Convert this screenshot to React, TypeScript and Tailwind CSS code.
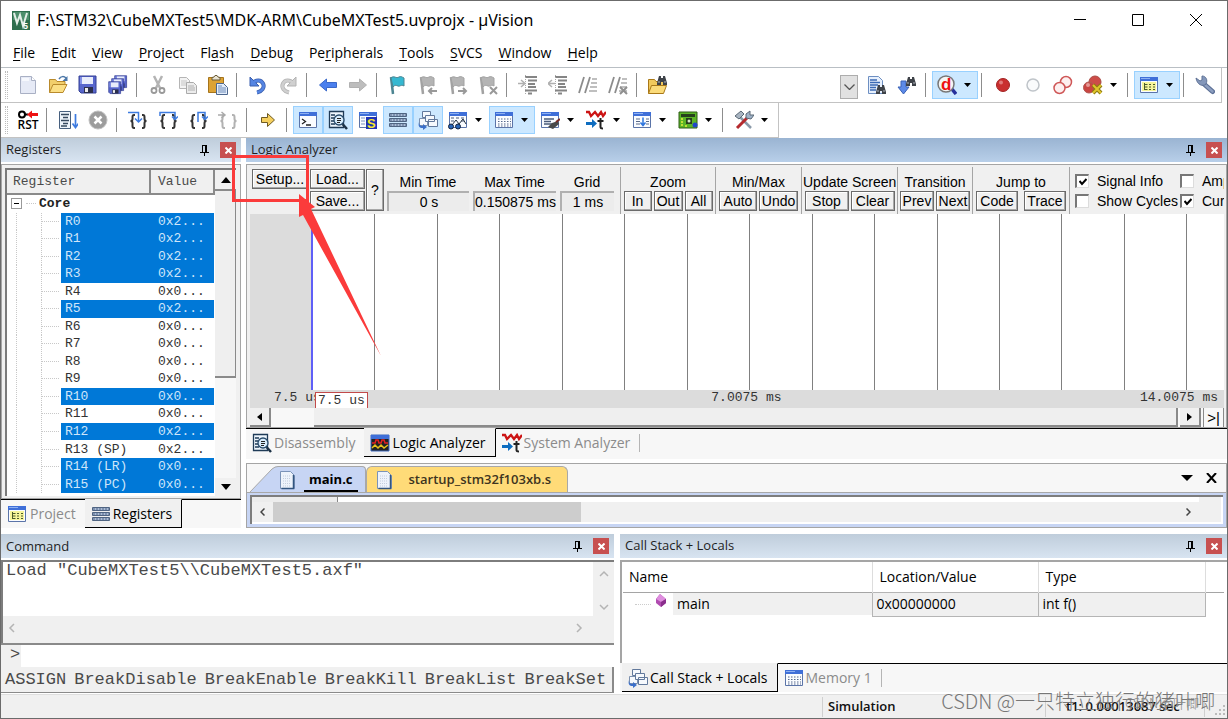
import type { ReactNode } from 'react';
import clsx from 'clsx';

/* ---------- icons ---------- */

function Icon({ children, size = 20 }: { children: ReactNode; size?: number }) {
  return (
    <svg width={size} height={size} viewBox="0 0 20 20" fill="none" className="shrink-0" aria-hidden="true">
      {children}
    </svg>
  );
}

function Caret() {
  return (
    <svg width="7" height="4" viewBox="0 0 7 4" aria-hidden="true">
      <path d="M0 0h7L3.500 4z" fill="#000" />
    </svg>
  );
}

const page = (
  <Icon>
    <path d="M2.500 1.500h11l4 4v13h-15z" fill="#e6eaf6" stroke="#a9b0c4" />
    <path d="M13.500 1.500v4h4" fill="#fff" stroke="#a9b0c4" />
    <path d="M4 3h7v3H4z" fill="#f6f8fd" />
  </Icon>
);

const open = (
  <Icon>
    <path d="M1.500 17.500v-13h6l1.500 2h8v3" fill="#f2cf6c" stroke="#b98a2c" />
    <path d="M1.500 17.500l3.500-8h14l-4 8z" fill="#fbdf85" stroke="#b98a2c" />
    <path d="M11 4c2-3 5-3 7-1" stroke="#4b77a8" strokeWidth="1.500" />
    <path d="M19.500 1v5h-5z" fill="#4b77a8" />
  </Icon>
);

function Floppy({ x = 0, y = 0, s = 1 }: { x?: number; y?: number; s?: number }) {
  return (
    <g transform={`translate(${x} ${y}) scale(${s})`}>
      <path d="M1 1h17v17H3l-2-2z" fill="#5866cc" stroke="#333f95" />
      <path d="M4 2h11v7H4z" fill="#e9edfb" />
      <path d="M2 2h2v7H2z" fill="#8391e6" />
      <path d="M6 12h9v6H6z" fill="#2c2f4c" />
      <path d="M7 13h3v4H7z" fill="#eee" />
    </g>
  );
}

const save = (
  <Icon>
    <Floppy x={0} y={0} />
  </Icon>
);

const saveAll = (
  <Icon>
    <Floppy x={6} y={0} s={0.7} />
    <Floppy x={3} y={3} s={0.7} />
    <Floppy x={0} y={6} s={0.7} />
  </Icon>
);

const cut = (
  <Icon>
    <path d="M6 1l6 12M14 1L8 13" stroke="#b4b4b4" strokeWidth="2.500" />
    <circle cx="6" cy="15.500" r="2.500" stroke="#999" strokeWidth="1.800" />
    <circle cx="14" cy="15.500" r="2.500" stroke="#999" strokeWidth="1.800" />
  </Icon>
);

const copy = (
  <Icon>
    <path d="M1.500 2.500h7l3 3v8h-10z" fill="#f3f3f3" stroke="#b5b5b5" />
    <path d="M3 6h6M3 8h6M3 10h6" stroke="#c5c5c5" />
    <path d="M8.500 7.500h7l3 3v8h-10z" fill="#ececec" stroke="#aaa" />
    <path d="M10 11h6M10 13h7M10 15h7" stroke="#b0b0b0" />
  </Icon>
);

const paste = (
  <Icon>
    <path d="M.500 2.500h15v15H.500z" fill="#dda335" stroke="#a5741c" />
    <path d="M4 5h8V2.500L10 2 9 .500H7L6 2l-2 .500z" fill="#e8e3d2" stroke="#6b5b36" />
    <path d="M8.500 8.500h7l4 4v7h-11z" fill="#e4eefb" stroke="#4d678e" />
    <path d="M10 11h4M10 13h8M10 15h8M10 17h8" stroke="#6c8ab8" />
  </Icon>
);

function Turn({ color, edge, flip }: { color: string; edge: string; flip?: boolean }) {
  return (
    <Icon>
      <g transform={flip ? 'translate(20 0) scale(-1 1)' : undefined}>
        <path d="M9 17.500c5-1 8-5 6-9-2-4-7-4-10-.500" stroke={edge} strokeWidth="4" />
        <path d="M2 2v9h9z" fill={color} stroke={edge} />
        <path d="M9 17.500c5-1 8-5 6-9-2-4-7-4-10-.500" stroke={color} strokeWidth="2.500" />
      </g>
    </Icon>
  );
}

function Arrow({ color, edge, flip }: { color: string; edge: string; flip?: boolean }) {
  return (
    <Icon>
      <path
        transform={flip ? 'translate(20 0) scale(-1 1)' : undefined}
        d="M1.500 10l7-6v3.500h10v5h-10V16z"
        fill={color}
        stroke={edge}
      />
    </Icon>
  );
}

function Flag({ children, color = '#b4b4b4', edge = '#a2a2a2' }: { children?: ReactNode; color?: string; edge?: string }) {
  return (
    <Icon>
      <path d="M3 2l2 17" stroke={edge} strokeWidth="2.500" />
      <path d="M3 3c3-3 5 1 8-1 2-1 3 0 5 1v8c-3-2-4 1-6 0-3-1-3-1-5 1z" fill={color} stroke={edge} />
      {children}
    </Icon>
  );
}

function Indent({ out }: { out?: boolean }) {
  return (
    <Icon>
      <path d="M7 2h12M10 5.500h9M10 9h7M10 12h8M7 15.500h12M10 18.500h4" stroke="#858585" strokeWidth="2" />
      <path d="M7.500 0v20" stroke="#aaa" strokeDasharray="1 1" />
      <path d={out ? 'M0 8.500h7M4 5L0 8.500 4 12' : 'M0 8.500h7M3 5l4 3.500L3 12'} stroke="#b0b0b0" strokeWidth="1.500" />
    </Icon>
  );
}

function Comment({ off }: { off?: boolean }) {
  return (
    <Icon>
      <path d="M6 2L1 18M12 2L7 18" stroke="#8c8c8c" strokeWidth="1.800" />
      <path d="M14 4h5M13 8h6M12 12h7M11 16h8" stroke="#aaa" strokeWidth="1.500" />
      {off && <path d="M12 12l7 7M19 12l-7 7" stroke="#8f8f8f" strokeWidth="2" />}
    </Icon>
  );
}

function Binoculars({ x = 0, y = 0 }: { x?: number; y?: number }) {
  return (
    <g transform={`translate(${x} ${y})`}>
      <path d="M2 0h2v2h2V0h2l2 7v2H6V6H4v3H0V7z" fill="#3e4248" />
      <path d="M1 6h2M7 6h2" stroke="#aeb4bd" />
    </g>
  );
}

const findInFiles = (
  <Icon>
    <path d="M.500 18.500v-14h6l1.500 2h9v3" fill="#f1c95c" stroke="#a97818" />
    <path d="M.500 18.500l3-8h15l-3 8z" fill="#fbdb7a" stroke="#a97818" />
    <Binoculars x={9} y={1} />
  </Icon>
);

const findDoc = (
  <Icon>
    <path d="M1.500 1.500h10l4 4v13h-14z" fill="#e7f0fd" stroke="#6d8fc2" />
    <path d="M3 5h7M3 7.500h10M3 10h8M3 12.500h6M3 15h6" stroke="#3c6ab4" strokeWidth="1.300" />
    <Binoculars x={9} y={10} />
  </Icon>
);

const findNext = (
  <Icon>
    <path d="M4 6h5v6h3l-5.500 7L1 12h3z" fill="#5c8ae8" stroke="#3a62b6" />
    <Binoculars x={9} y={2} />
  </Icon>
);

const debug = (
  <Icon>
    <path d="M14 13l5 6" stroke="#26309c" strokeWidth="3.500" />
    <circle cx="9" cy="9" r="8" fill="#f5f5f5" stroke="#777" strokeWidth="1.500" />
    <text x="4" y="15" fontSize="17" fontWeight="700" fill="#ee1111" className="font-['Liberation_Sans']">
      d
    </text>
  </Icon>
);

const breakpoint = (
  <Icon>
    <circle cx="10" cy="10" r="6.500" fill="#c92f2f" stroke="#a32424" />
    <circle cx="8" cy="7.500" r="2" fill="#e07a7a" />
  </Icon>
);

const breakpointOff = (
  <Icon>
    <circle cx="10" cy="10" r="6" fill="#fafbfc" stroke="#bfc4c9" strokeWidth="1.500" />
  </Icon>
);

const breakpointsOff = (
  <Icon>
    <circle cx="13" cy="7" r="5.500" fill="#fdf0f0" stroke="#cf5757" strokeWidth="1.500" />
    <circle cx="6.500" cy="13" r="5.500" fill="#fdf0f0" stroke="#cf5757" strokeWidth="1.500" />
  </Icon>
);

const breakpointsKill = (
  <Icon>
    <circle cx="12" cy="7" r="6" fill="#cd4c48" stroke="#a94a44" />
    <circle cx="6" cy="12.500" r="5.500" fill="#c94541" stroke="#b25b55" />
    <circle cx="5" cy="10" r="2" fill="#e59a96" />
    <path d="M10 10l8 8M18 10l-8 8" stroke="#8d7a10" strokeWidth="4" />
    <path d="M10 10l8 8M18 10l-8 8" stroke="#e0c52c" strokeWidth="2" />
  </Icon>
);

function WindowFrame({ children, size }: { children?: ReactNode; size?: number }) {
  return (
    <Icon size={size}>
      <path d="M1.500 2.500h17v15h-17z" fill="#fafcff" stroke="#5b74a8" />
      <path d="M1 2h18v4H1z" fill="#3f6fd8" />
      <path d="M2 3h9v1H2z" fill="#8db0f2" />
      {children}
    </Icon>
  );
}

const projectWindow = (
  <WindowFrame>
    <path d="M3 7h14v9H3z" fill="#f7f59a" />
    <path d="M5.500 8v7M5.500 9.500h3M5.500 12h3M5.500 14.500h3M10 9.500h2M10 12h2M10 14.500h2M14 9.500h2M14 12h2M14 14.500h2" stroke="#4c5a2b" />
  </WindowFrame>
);

const wrench = (
  <Icon>
    <path d="M9 9l8.500 7.500" stroke="#5c7096" strokeWidth="5" strokeLinecap="round" />
    <path d="M9 9l8.500 7.500" stroke="#8c9ec0" strokeWidth="2.500" strokeLinecap="round" />
    <path d="M1 3l4 3 2-1 0-4c4 0 6 4 4 8-3 3-9 1-10-6z" fill="#8497ba" stroke="#5f7296" />
  </Icon>
);

const run = (
  <Icon>
    <path d="M1.500 1.500h11v17h-11z" fill="#eef4fb" stroke="#47607f" />
    <path d="M3 4.500h8M5 7.500h5M3 10.500h8M5 13.500h5M3 16h6" stroke="#36495f" strokeWidth="1.500" />
    <path d="M17.500 4v13M14.500 13.500l3 4 3-4" stroke="#3d7be0" strokeWidth="1.700" />
  </Icon>
);

const stop = (
  <Icon>
    <circle cx="10" cy="10" r="9" fill="#9c9c9c" stroke="#c0c0c0" />
    <path d="M6.500 6.500l7 7M13.500 6.500l-7 7" stroke="#fff" strokeWidth="2.500" />
  </Icon>
);

function Braces({ d, tip, color = '#333' }: { d: string; tip: string; color?: string }) {
  return (
    <Icon>
      <path
        d="M7 5H6Q4.500 5 4.500 7v2q0 2-2 2 2 0 2 2v3q0 2 1.500 2h1M14 5h1q1.500 0 1.500 2v2q0 2 2 2-2 0-2 2v3q0 2-1.500 2h-1"
        stroke={color}
        strokeWidth="2"
      />
      <path d={d} stroke={color === '#333' ? '#3d7be0' : '#aaa'} strokeWidth="1.500" />
      <path d={tip} stroke={color === '#333' ? '#3d7be0' : '#aaa'} strokeWidth="1.500" />
    </Icon>
  );
}

const showNext = (
  <Icon>
    <path d="M3.500 7.500h6v-4l7 6.500-7 6.500v-4h-6z" fill="#f5cf5e" stroke="#6e5a22" />
  </Icon>
);

const commandWindow = (
  <WindowFrame>
    <path d="M4 9l3.500 2.500L4 14M8 15h5" stroke="#222" strokeWidth="1.300" />
  </WindowFrame>
);

const disassembly = (
  <Icon>
    <path d="M1.500 1.500h14v16h-14z" fill="#eef6fd" stroke="#1f3b57" strokeWidth="1.300" />
    <path d="M3 5h4M3 8h3M3 11h3M3 14h4" stroke="#1f3b57" strokeWidth="1.300" />
    <path d="M14.500 14l4.500 5" stroke="#1d3247" strokeWidth="2.500" />
    <circle cx="11" cy="10" r="5" fill="#d9edfc" stroke="#274a6b" strokeWidth="1.300" />
    <path d="M9 8.500h4M9 10.500h4M9 12.500h3" stroke="#222" />
  </Icon>
);

const symbols = (
  <WindowFrame>
    <path d="M3 8h4M3 11h4M3 14h4" stroke="#7b93bd" />
    <path d="M8 7h11v12H8z" fill="#2033b5" />
    <text x="9" y="18" fontSize="13" fontWeight="700" fill="#f7e92b" className="font-['Liberation_Sans']">
      S
    </text>
  </WindowFrame>
);

const registersIcon = (
  <Icon>
    {[3, 8, 13].map((y) => (
      <g key={y}>
        <path d={`M1.500 ${y + 0.5}h17v3h-17z`} fill="#a9bbd4" stroke="#4f6482" />
        <path d={`M2 ${y + 2}h16`} stroke="#52678a" strokeDasharray="2 1" />
      </g>
    ))}
  </Icon>
);

const callStackIcon = (
  <Icon>
    <path d="M4.500 1.500h8v6h-8z" fill="#f6f9fd" stroke="#62799c" />
    <path d="M1.500 8.500h8v7h-8z" fill="#f6f9fd" stroke="#7c90ae" />
    <path d="M10.500 9.500h9v7h-9zM7.500 5.500h9v6h-9z" fill="#f6f9fd" stroke="#62799c" />
    <path d="M1 12c0 3 1 4 4 4v-2l4 3-4 3v-2c-4 0-5-2-4-6z" fill="#3b6fc9" />
  </Icon>
);

const watch = (
  <WindowFrame>
    <path d="M3 8h3M8 8h3M13 8h3M3 11h3M13 11h3" stroke="#4a5874" />
    <path d="M4 15l4-5 3 4 4-5 3 5" stroke="#22303f" />
    <circle cx="3" cy="16.500" r="2.500" fill="#2764b7" stroke="#14233d" />
    <circle cx="10" cy="16.500" r="2.500" fill="#2764b7" stroke="#14233d" />
  </WindowFrame>
);

const memory = (
  <WindowFrame>
    <path d="M4 9h13M4 11.500h13M4 14h13M4 16h13" stroke="#56698c" strokeDasharray="1.500 1.500" />
  </WindowFrame>
);

const serial = (
  <WindowFrame>
    <path d="M4 9h10M4 11.500h7M4 14h8" stroke="#4b5c7b" strokeWidth="1.300" />
    <path d="M8 17l4-4 6-2 1 3-6 5z" fill="#4a4a4a" />
    <path d="M16 12l4-3" stroke="#7b2b25" strokeWidth="2" />
  </WindowFrame>
);

const systemAnalyzer = (
  <Icon>
    <path d="M0 2h3l2 4 4-4 3 4 3-4 2 4 3-4" stroke="#cc1414" strokeWidth="2.300" />
    <path d="M0 12h6V9l5 4.500L6 18v-3H0z" fill="#0e6dc0" />
    <path d="M14.500 8v9q0 1.500 2.500 1.500M11.500 11h6" stroke="#222" strokeWidth="2" />
  </Icon>
);

const trace = (
  <WindowFrame>
    <path d="M4 9h4M4 11.500h4M4 14h4M14 9h3M14 11.500h3M14 14h3" stroke="#5a6b8a" />
    <path d="M11 7.500v7M8.500 12.500l2.500 3 2.500-3" stroke="#2d74dd" strokeWidth="1.500" />
  </WindowFrame>
);

const board = (
  <Icon>
    <path d="M1 2h18v16H1z" fill="#5bb526" stroke="#2f5d16" />
    <path d="M3 4h14v3H3zM8 8h6v6H8z" fill="#26401c" />
    <circle cx="11" cy="11" r="1.500" fill="#d9e7c9" />
    <path d="M3 9h2M3 12h2M3 15h2M7 16h2" stroke="#e3ee3b" strokeWidth="1.500" />
    <circle cx="17" cy="15" r="2.500" fill="#2145c9" />
  </Icon>
);

const tools = (
  <Icon>
    <path d="M4 5l13 13" stroke="#8a99a8" strokeWidth="2.500" />
    <path d="M1 6l6-5 3 3-5 5z" fill="#a9b5c2" stroke="#5a6875" />
    <path d="M13 8L3 18" stroke="#b52a2e" strokeWidth="3" />
    <path d="M12 8l0-4 4-3v4h4l-3 4z" fill="#9fb2c8" stroke="#5a6875" />
  </Icon>
);

const logicAnalyzerIcon = (
  <Icon>
    <path d="M1 2h18v16H1z" fill="#222" stroke="#3d68bd" />
    <path d="M1 2h18v4H1z" fill="#3f6fd8" />
    <path d="M2 10h3l1-3h2l1 3h2l1-3h2l1 3h3" stroke="#e52020" strokeWidth="1.500" />
    <path d="M2 15l3-3 3 3 3-3 3 3 4-3" stroke="#e8c21c" strokeWidth="1.500" />
  </Icon>
);

const fileIcon = (
  <Icon>
    <path d="M2.500 1.500h10l4 4v13h-14z" fill="#eef3fb" stroke="#7b93b8" />
    <path d="M5 6h8M5 8.500h8M5 11h8M5 13.500h8M5 16h8" stroke="#c3cddd" strokeDasharray="1 1" />
    <path d="M15.500 5v13.500h-12" stroke="#33557f" strokeWidth="1.500" />
  </Icon>
);

/* ---------- toolbars ---------- */

type ToolProps = { label: string; icon: ReactNode; menu?: boolean; active?: boolean };

function Tool({ label, icon, menu, active }: ToolProps) {
  return (
    <button
      type="button"
      aria-label={label}
      className={clsx(
        'flex h-7 shrink-0 items-center border',
        menu ? 'w-[46px] justify-between pl-1 pr-[6px]' : 'w-[30px] justify-center',
        active ? 'border-[#99d1ff] bg-[#cce8ff]' : 'border-transparent',
      )}
    >
      {icon}
      {menu && <Caret />}
    </button>
  );
}

function Sep() {
  return <span className="ml-[3px] mr-[6px] h-6 w-px shrink-0 bg-[#8d8d8d]" />;
}

function Grip() {
  return <span className="ml-1 mr-[5px] h-7 w-[3px] shrink-0 border-x border-dotted border-[#bcbcbc]" />;
}

const menus = [
  ['', 'F', 'ile'],
  ['', 'E', 'dit'],
  ['', 'V', 'iew'],
  ['', 'P', 'roject'],
  ['Fl', 'a', 'sh'],
  ['', 'D', 'ebug'],
  ['Pe', 'r', 'ipherals'],
  ['', 'T', 'ools'],
  ['', 'S', 'VCS'],
  ['', 'W', 'indow'],
  ['', 'H', 'elp'],
];

function TitleBar() {
  return (
    <header className="flex h-[38px] items-center bg-white pl-[11px]">
      <svg width="18" height="19" viewBox="0 0 18 19" aria-hidden="true">
        <path d="M0 0h18v19H0z" fill="#2d6e4d" />
        <path d="M1 1h16v8H1z" fill="#4d8f6c" />
        <path d="M2 2l3 10 3-8 3 11 4-13" stroke="#e4efe8" strokeWidth="2" fill="none" />
        <text x="11" y="18" fontSize="9" fontWeight="700" fill="#fff" className="font-['Liberation_Sans']">
          5
        </text>
      </svg>
      <h1 className="ml-[7px] font-['Noto_Sans',sans-serif] text-base font-normal leading-5 text-black">
        F:\STM32\CubeMXTest5\MDK-ARM\CubeMXTest5.uvprojx - µVision
      </h1>
      <div className="ml-auto flex pr-[2px]">
        <button type="button" aria-label="Minimize" className="grid h-9 w-[58px] place-items-center">
          <svg width="12" height="12" viewBox="0 0 12 12"><path d="M0 5.500h12" stroke="#000" /></svg>
        </button>
        <button type="button" aria-label="Maximize" className="grid h-9 w-[58px] place-items-center">
          <svg width="12" height="12" viewBox="0 0 12 12"><path d="M.500 .500h11v11H.500z" stroke="#000" fill="none" /></svg>
        </button>
        <button type="button" aria-label="Close" className="grid h-9 w-[58px] place-items-center">
          <svg width="12" height="12" viewBox="0 0 12 12"><path d="M0 0l12 12M12 0L0 12" stroke="#000" /></svg>
        </button>
      </div>
    </header>
  );
}

function MenuBar() {
  return (
    <nav className="flex h-[29px] items-center gap-4 border-b border-[#b9bfc4] bg-white pb-px pl-3 text-sm font-medium text-black">
      {menus.map(([before, key, after]) => (
        <button type="button" key={before + key + after}>
          {before}
          <span className="underline underline-offset-2">{key}</span>
          {after}
        </button>
      ))}
    </nav>
  );
}

function FileToolbar() {
  return (
    <div className="mr-[5px] flex h-[35px] items-center border-b border-r border-[#c3c3c3] bg-white pr-px">
      <Grip />
      <Tool label="New" icon={page} />
      <Tool label="Open" icon={open} />
      <Tool label="Save" icon={save} />
      <Tool label="Save all" icon={saveAll} />
      <Sep />
      <Tool label="Cut" icon={cut} />
      <Tool label="Copy" icon={copy} />
      <Tool label="Paste" icon={paste} />
      <Sep />
      <Tool label="Undo" icon={<Turn color="#5585e3" edge="#3b5fae" />} />
      <Tool label="Redo" icon={<Turn color="#d0d0d0" edge="#b3b3b3" flip />} />
      <Sep />
      <Tool label="Back" icon={<Arrow color="#4b80ee" edge="#3b69c9" />} />
      <Tool label="Forward" icon={<Arrow color="#bdbdbd" edge="#b1b1b1" flip />} />
      <Sep />
      <Tool label="Bookmark" icon={<Flag color="#35b8d1" edge="#4d8592" />} />
      <Tool label="Previous bookmark" icon={<Flag><path d="M19 16h-8M14 13l-3 3 3 3" stroke="#999" strokeWidth="2" /></Flag>} />
      <Tool label="Next bookmark" icon={<Flag><path d="M10 16h8M15 13l3 3-3 3" stroke="#999" strokeWidth="2" /></Flag>} />
      <Tool label="Clear bookmarks" icon={<Flag><path d="M12 12l7 7M19 12l-7 7" stroke="#999" strokeWidth="2" /></Flag>} />
      <Sep />
      <Tool label="Indent" icon={<Indent />} />
      <Tool label="Unindent" icon={<Indent out />} />
      <Tool label="Comment" icon={<Comment />} />
      <Tool label="Uncomment" icon={<Comment off />} />
      <Sep />
      <Tool label="Find in files" icon={findInFiles} />
      <button type="button" aria-label="Search history" className="ml-auto mr-1 mt-[3px] grid h-6 w-[18px] place-items-center border border-[#adadad] bg-[#e1e1e1]">
        <svg width="11" height="6" viewBox="0 0 11 6" fill="none"><path d="M.500 .500l5 5 5-5" stroke="#555" strokeWidth="1.300" /></svg>
      </button>
      <Tool label="Find" icon={findDoc} />
      <Tool label="Incremental find" icon={findNext} />
      <Sep />
      <Tool label="Debug session" icon={debug} menu active />
      <Sep />
      <Tool label="Breakpoint" icon={breakpoint} />
      <Tool label="Disable breakpoint" icon={breakpointOff} />
      <Tool label="Disable all breakpoints" icon={breakpointsOff} />
      <Tool label="Kill all breakpoints" icon={breakpointsKill} menu />
      <Sep />
      <Tool label="Project window" icon={projectWindow} menu active />
      <Sep />
      <Tool label="Configuration" icon={wrench} />
    </div>
  );
}

function DebugToolbar() {
  return (
    <div className="flex h-[35px] w-fit items-center border-b border-r border-[#c3c3c3] bg-white pr-[3px]">
      <Grip />
      <button type="button" className="flex w-[30px] shrink-0 flex-col items-center text-[12px] font-semibold leading-[12px] text-black">
        <svg width="20" height="9" viewBox="0 0 20 9" fill="none" aria-hidden="true">
          <circle cx="4" cy="4.500" r="3" stroke="#000" strokeWidth="2" />
          <path d="M7 4.500h3" stroke="#000" strokeWidth="2" />
          <path d="M9 4.500l5-4v2.500h6v3h-6v2.500z" fill="#e11" />
        </svg>
        RST
      </button>
      <Sep />
      <Tool label="Run" icon={run} />
      <Tool label="Stop" icon={stop} />
      <Sep />
      <Tool label="Step" icon={<Braces d="M0 2.500h10.500v9" tip="M7 8.500l3.500 3.500L14 8.500" />} />
      <Tool label="Step over" icon={<Braces d="M2 6V2.500h15V9" tip="M14 6.500l3 3 3-3" />} />
      <Tool label="Step out" icon={<Braces d="M10 12V2.500h7V9" tip="M14 6.500l3 3 3-3" />} />
      <Tool label="Run to cursor" icon={<Braces d="M0 5h6" tip="M3.500 2L7 5 3.500 8" color="#b2b2b2" />} />
      <Sep />
      <Tool label="Show next statement" icon={showNext} />
      <Sep />
      <Tool label="Command window" icon={commandWindow} active />
      <Tool label="Disassembly window" icon={disassembly} active />
      <Tool label="Symbols window" icon={symbols} />
      <Tool label="Registers window" icon={registersIcon} active />
      <Tool label="Call stack window" icon={callStackIcon} active />
      <Tool label="Watch windows" icon={watch} menu />
      <Tool label="Memory windows" icon={memory} menu active />
      <Tool label="Serial windows" icon={serial} menu />
      <Tool label="Analysis windows" icon={systemAnalyzer} menu />
      <Tool label="Trace windows" icon={trace} menu />
      <Tool label="System viewer" icon={board} menu />
      <Sep />
      <Tool label="Toolbox" icon={tools} menu />
    </div>
  );
}

/* ---------- panels ---------- */

function PanelTitle({ title, active }: { title: string; active?: boolean }) {
  return (
    <div
      className={clsx(
        'flex h-6 shrink-0 items-center gap-2 bg-linear-to-b pl-[5px] pr-[5px]',
        active ? 'from-[#9ab4d2] to-[#b8cfe9]' : 'from-[#bfcddb] to-[#d8e4f1]',
      )}
    >
      <h2 className="flex-1 text-[13px] text-[#1f1f1f]">{title}</h2>
      <button type="button" aria-label={`Pin ${title}`} className="grid h-4 w-4 place-items-center">
        <svg width="9" height="11" viewBox="0 0 9 11" fill="none" aria-hidden="true">
          <path d="M2 .500h5M2.500 0v7M0 7.500h9M4.500 7.500V11" stroke="#000" />
          <path d="M6 0v7" stroke="#000" strokeWidth="2" />
        </svg>
      </button>
      <button type="button" aria-label={`Close ${title}`} className="grid h-4 w-4 place-items-center bg-[#c75050]">
        <svg width="7" height="7" viewBox="0 0 7 7" aria-hidden="true">
          <path d="M.500 .500l6 6M6.500 .500l-6 6" stroke="#fff" strokeWidth="2" />
        </svg>
      </button>
    </div>
  );
}

type TabProps = { label: string; icon: ReactNode; active?: boolean };

function Tab({ label, icon, active }: TabProps) {
  return (
    <button
      type="button"
      role="tab"
      aria-selected={!!active}
      className={clsx(
        'flex h-[29px] shrink-0 items-center gap-[2px] whitespace-nowrap border-t pl-[6px] pr-[9px] text-sm',
        active ? 'border-b border-r border-b-black border-r-black border-t-[#f0f0f0] bg-[#f0f0f0] font-medium text-black' : 'border-t-black text-[#8b8b8b]',
      )}
    >
      {icon}
      {label}
    </button>
  );
}

function TabRest() {
  return (
    <span className="flex h-[29px] flex-1 items-center border-t border-black">
      <span className="h-[18px] w-px bg-[#b5b5b5]" />
    </span>
  );
}

const registers = [
  { name: 'R0', value: '0x2...', changed: true },
  { name: 'R1', value: '0x2...', changed: true },
  { name: 'R2', value: '0x2...', changed: true },
  { name: 'R3', value: '0x2...', changed: true },
  { name: 'R4', value: '0x0...' },
  { name: 'R5', value: '0x2...', changed: true },
  { name: 'R6', value: '0x0...' },
  { name: 'R7', value: '0x0...' },
  { name: 'R8', value: '0x0...' },
  { name: 'R9', value: '0x0...' },
  { name: 'R10', value: '0x0...', changed: true },
  { name: 'R11', value: '0x0...' },
  { name: 'R12', value: '0x2...', changed: true },
  { name: 'R13 (SP)', value: '0x2...' },
  { name: 'R14 (LR)', value: '0x0...', changed: true },
  { name: 'R15 (PC)', value: '0x0...', changed: true },
];

function RegistersPanel() {
  return (
    <section className="flex w-[240px] shrink-0 flex-col">
      <PanelTitle title="Registers" />
      <div className="mt-[2px] flex flex-col border border-[#a5a5a5] bg-[#f0f0f0] pb-[2px] pl-[3px] pr-1 pt-[3px]">
        <div className="flex h-[328px] border-l-2 border-t-2 border-[#7a7a7a] bg-white">
          <div className="relative flex-1">
            <table className="h-[323px] w-full table-fixed border-collapse font-['Liberation_Mono',monospace] text-[13px] leading-[17px] text-[#333]">
              <colgroup>
                <col className="w-[54px]" />
                <col className="w-[89px]" />
                <col />
              </colgroup>
              <thead>
                <tr className="h-6 bg-[#f0f0f0] text-left text-[#4a4a4a]">
                  <th colSpan={2} className="border-b-2 border-r-2 border-[#8a8a8a] px-[6px] font-normal">Register</th>
                  <th className="border-b-2 border-r-2 border-[#8a8a8a] px-[7px] font-normal">Value</th>
                </tr>
              </thead>
              <tbody>
                <tr>
                  <td colSpan={3} className="p-0 font-semibold text-[#222]">
                    <div className="flex items-center">
                      <button type="button" aria-label="Collapse Core" className="ml-1 grid h-[11px] w-[11px] place-items-center border border-[#999] bg-white">
                        <span className="h-px w-[5px] bg-black" />
                      </button>
                      <span className="ml-1 mr-[3px] w-[10px] border-t border-dotted border-[#c8c8c8]" />
                      Core
                    </div>
                  </td>
                </tr>
                {registers.map((r) => (
                  <tr key={r.name}>
                    <td className="p-0">
                      <div className="flex h-[17px] pl-[9px]">
                        <span className="w-[25px] border-l border-dotted border-[#c8c8c8]" />
                        <span className="flex flex-1 items-center border-l border-dotted border-[#c8c8c8]">
                          <span className="w-[17px] border-t border-dotted border-[#c8c8c8]" />
                        </span>
                      </div>
                    </td>
                    <td className={clsx('p-0 pl-1', r.changed && 'bg-[#0078d7] text-[#cfe6fa]')}>{r.name}</td>
                    <td className={clsx('p-0 pl-2', r.changed && 'bg-[#0078d7] text-[#cfe6fa]')}>{r.value}</td>
                  </tr>
                ))}
              </tbody>
            </table>
          </div>
          <div className="flex w-[21px] flex-col bg-[#f7f7f7]">
            <button type="button" aria-label="Scroll registers up" className="grid h-[21px] place-items-center border-b-2 border-[#8a8a8a] bg-[#f0f0f0]">
              <svg width="10" height="6" viewBox="0 0 10 6"><path d="M0 6h10L5 0z" /></svg>
            </button>
            <div className="h-[187px] border-b-2 border-r border-[#8a8a8a] bg-[#efefef]" />
            <button type="button" aria-label="Scroll registers down" className="mt-auto grid h-[18px] place-items-center bg-[#f0f0f0]">
              <svg width="10" height="6" viewBox="0 0 10 6"><path d="M0 0h10L5 6z" /></svg>
            </button>
          </div>
        </div>
      </div>
      <div role="tablist" className="flex bg-[#f7f7f7]">
        <Tab label="Project" icon={<span className="mr-px">{projectWindow}</span>} />
        <Tab label="Registers" icon={registersIcon} active />
        <span className="flex-1 border-t border-black" />
      </div>
    </section>
  );
}

function BoxButton({ children, className }: { children: ReactNode; className?: string }) {
  return (
    <button type="button" className={clsx('h-5 whitespace-nowrap border border-[#6b6b6b] bg-[#f0f0f0] text-center leading-[18px] shadow-[inset_-1px_-1px_0_#a8a8a8,inset_1px_1px_0_#fff]', className)}>
      {children}
    </button>
  );
}

function Group({ title, children, className }: { title: string; children: ReactNode; className: string }) {
  return (
    <div className={clsx('flex h-[47px] shrink-0 flex-col justify-between border-l border-[#a5a5a5] px-px pb-1', className)}>
      <span className="whitespace-nowrap pt-[6px] text-center leading-[18px]">{title}</span>
      <div className="flex justify-center gap-[2px]">{children}</div>
    </div>
  );
}

function Readout({ title, value, className }: { title: string; value: string; className: string }) {
  return (
    <div className={clsx('flex h-[47px] shrink-0 flex-col justify-between pb-1', className)}>
      <span className="pt-[6px] text-center leading-[18px]">{title}</span>
      <output className="h-5 whitespace-nowrap border-l-2 border-t-2 border-[#b0b0b0] bg-[#ececec] text-center leading-[18px]">{value}</output>
    </div>
  );
}

function Check({ label, checked }: { label: string; checked?: boolean }) {
  return (
    <label className="flex items-center gap-2 whitespace-nowrap leading-5">
      <span className="relative h-[14px] w-[14px] shrink-0">
        <input type="checkbox" defaultChecked={checked} className="peer block h-[14px] w-[14px] appearance-none border-b border-r border-l-2 border-t-2 border-[#dcdcdc] border-l-[#777] border-t-[#777] bg-white" />
        <svg width="8" height="8" viewBox="0 0 8 8" fill="none" className="absolute left-1 top-1 hidden peer-checked:block">
          <path d="M.500 3l2.500 3L7.500 1" stroke="#000" strokeWidth="2" />
        </svg>
      </span>
      {label}
    </label>
  );
}

const gridLines = Array.from({ length: 40 }, (_, i) => Math.round((i + 1) * 62.45));

function LogicAnalyzer() {
  return (
    <section className="flex min-w-0 flex-col">
      <PanelTitle title="Logic Analyzer" active />
      <div className="mt-[2px] border border-[#a5a5a5] bg-[#f0f0f0] pl-[3px] pr-[2px]">
        <div className="flex h-[49px] overflow-hidden pt-[2px] font-['Liberation_Sans',sans-serif] text-sm text-black">
          <div className="ml-[2px] mt-[2px] grid h-fit shrink-0 grid-cols-[56px_55px] gap-x-[2px] gap-y-[2px]">
            <BoxButton>Setup...</BoxButton>
            <BoxButton>Load...</BoxButton>
            <BoxButton className="col-start-2">Save...</BoxButton>
          </div>
          <BoxButton className="ml-px mr-[3px] mt-[2px] h-[42px]! w-[18px] shrink-0">?</BoxButton>
          <Readout title="Min Time" value="0 s" className="mr-1 w-[82px]" />
          <Readout title="Max Time" value="0.150875 ms" className="mr-1 w-[83px]" />
          <Readout title="Grid" value="1 ms" className="mr-[6px] w-[54px]" />
          <Group title="Zoom" className="w-[95px]">
            <BoxButton className="w-7">In</BoxButton>
            <BoxButton className="w-[29px]">Out</BoxButton>
            <BoxButton className="w-7">All</BoxButton>
          </Group>
          <Group title="Min/Max" className="w-[86px]">
            <BoxButton className="w-[38px]">Auto</BoxButton>
            <BoxButton className="w-[39px]">Undo</BoxButton>
          </Group>
          <Group title="Update Screen" className="w-24">
            <BoxButton className="w-11">Stop</BoxButton>
            <BoxButton className="w-11">Clear</BoxButton>
          </Group>
          <Group title="Transition" className="w-[75px]">
            <BoxButton className="w-[34px]">Prev</BoxButton>
            <BoxButton className="w-[34px]">Next</BoxButton>
          </Group>
          <Group title="Jump to" className="w-[97px]">
            <BoxButton className="mr-1 w-[42px]">Code</BoxButton>
            <BoxButton className="w-[42px]">Trace</BoxButton>
          </Group>
          <div className="grid h-[47px] grid-cols-[101px_auto] content-center gap-x-1 border-l border-[#a5a5a5] pl-[5px]">
            <Check label="Signal Info" checked />
            <Check label="Amplitude" />
            <Check label="Show Cycles" />
            <Check label="Cursor" checked />
          </div>
        </div>

        <div className="flex h-[176px] bg-white">
          <div className="w-[61px] shrink-0 bg-[#dcdcdc]" />
          <svg className="h-full min-w-0 flex-1" aria-label="Signal plot">
            <path d="M1 0v176" stroke="#2a2af5" strokeWidth="1.500" />
            {gridLines.map((x) => (
              <path key={x} d={`M${x + 1}.500 0v176`} stroke="#808080" />
            ))}
          </svg>
        </div>
        <div className="relative flex h-[18px] justify-between overflow-hidden bg-[#dcdcdc] pl-6 pr-[6px] font-['Liberation_Mono',monospace] text-[13px] leading-4 text-[#333]">
          <span>7.5 us</span>
          <span className="pl-8">7.0075 ms</span>
          <span>14.0075 ms</span>
          <span className="absolute left-[65px] top-[2px] border border-[#c24a4a] bg-white px-[2px]">7.5 us</span>
        </div>
        <div className="flex h-[19px] items-stretch bg-[#f8f8f8]">
          <button type="button" aria-label="Scroll left" className="grid w-[21px] place-items-center border-b-2 border-r-2 border-[#8a8a8a] bg-[#f0f0f0]">
            <svg width="5" height="8" viewBox="0 0 5 8"><path d="M5 0v8L0 4z" /></svg>
          </button>
          <div className="ml-[43px] mr-[2px] flex-1 border-b-2 border-r-2 border-[#8a8a8a] bg-[#efefef]" />
          <button type="button" aria-label="Scroll right" className="grid w-[21px] place-items-center border-b-2 border-r-2 border-[#8a8a8a] bg-[#f0f0f0]">
            <svg width="5" height="8" viewBox="0 0 5 8"><path d="M0 0v8l5-4z" /></svg>
          </button>
          <button type="button" className="ml-[2px] w-[21px] border-x border-[#8a8a8a] font-['Liberation_Sans',sans-serif] text-[15px] leading-[18px]">&gt;|</button>
        </div>
      </div>
      <div role="tablist" className="flex h-[31px] bg-[#f7f7f7]">
        <Tab label="Disassembly" icon={disassembly} />
        <Tab label="Logic Analyzer" icon={logicAnalyzerIcon} active />
        <Tab label="System Analyzer" icon={systemAnalyzer} />
        <TabRest />
      </div>
    </section>
  );
}

function EditorTabs() {
  return (
    <section className="mt-1 border border-[#a5a5a5]">
      <div role="tablist" className="flex h-7 items-end bg-[#f7f7f7] pl-[3px]">
        <button type="button" role="tab" aria-selected="true" className="flex h-[26px] shrink-0 text-[13px] font-bold text-black">
          <svg width="28" height="26" viewBox="0 0 28 26" aria-hidden="true">
            <path d="M0 26L22 3q3-3 6-3v26z" fill="#c7d5f4" />
            <path d="M0 26L22 3q3-2.500 6-2.500" stroke="#a8a8a8" fill="none" />
          </svg>
          <span className="flex h-[26px] items-center gap-[6px] rounded-tr-sm border-r border-t border-[#a8a8a8] bg-[#c7d5f4] pr-[7px]">
            {fileIcon}
            <span className="border-b-2 border-black px-[5px] leading-[22px]">main.c</span>
          </span>
        </button>
        <button type="button" role="tab" aria-selected="false" className="flex h-[26px] shrink-0 items-center rounded-t-md border border-b-0 border-[#a8a8a8] bg-[#ffdb78] pl-2 pr-4 text-[13px] font-semibold text-[#3d3420]">
          {fileIcon}
          <span className="pl-[14px]">startup_stm32f103xb.s</span>
        </button>
        <div className="ml-auto flex h-7 items-center gap-[13px] pr-[9px]">
          <button type="button" aria-label="Open files">
            <svg width="12" height="6" viewBox="0 0 12 6"><path d="M0 0h12L6 6z" /></svg>
          </button>
          <button type="button" aria-label="Close file">
            <svg width="11" height="10" viewBox="0 0 11 10"><path d="M1 0l9 10M10 0L1 10" stroke="#000" strokeWidth="2" /></svg>
          </button>
        </div>
      </div>
      <div className="border-t border-[#a8a8a8] bg-[#c7d5f4] px-[3px] pb-[3px] pt-[2px]">
        <div className="border-l-2 border-t-2 border-[#7d7d7d] bg-white pb-[2px] pr-[2px]">
          <div className="flex h-[5px]">
            <span className="w-[86px] border-r border-[#888] bg-[#ececec]" />
            <span className="ml-auto w-[22px] bg-[#f0f0f0]" />
          </div>
          <div className="flex h-5 items-center bg-[#f0f0f0]">
            <button type="button" aria-label="Scroll code left" className="grid w-[21px] place-items-center">
              <svg width="5" height="8" viewBox="0 0 5 8" fill="none"><path d="M4.500 .500L1 4l3.500 3.500" stroke="#444" strokeWidth="1.500" /></svg>
            </button>
            <div className="h-full w-[308px] bg-[#cdcdcd]" />
            <button type="button" aria-label="Scroll code right" className="ml-auto mr-[30px]">
              <svg width="5" height="8" viewBox="0 0 5 8" fill="none"><path d="M.500 .500L4 4 .500 7.500" stroke="#444" strokeWidth="1.500" /></svg>
            </button>
          </div>
        </div>
      </div>
    </section>
  );
}

const hints = ['ASSIGN', 'BreakDisable', 'BreakEnable', 'BreakKill', 'BreakList', 'BreakSet'];

function Chevron({ d }: { d: string }) {
  return (
    <svg width="10" height="10" viewBox="0 0 10 10" fill="none" aria-hidden="true">
      <path d={d} stroke="#b4b4b4" strokeWidth="1.500" />
    </svg>
  );
}

function CommandPanel() {
  return (
    <section className="w-[613px] shrink-0 font-['Liberation_Mono',monospace] text-[17px] leading-5 text-[#4a4a4a]">
      <div className="font-['Open_Sans',sans-serif]">
        <PanelTitle title="Command" />
      </div>
      <div className="mt-[2px] border-l-2 border-t-2 border-[#7d7d7d] bg-[#f0f0f0]">
        <div className="flex h-[54px]">
          <pre className="flex-1 bg-white pl-[3px] font-['Liberation_Mono',monospace] leading-[18px]">{'Load "CubeMXTest5\\\\CubeMXTest5.axf"'}</pre>
          <div className="flex w-[21px] flex-col items-center justify-between pb-1 pt-[7px]">
            <Chevron d="M1 7l4-4 4 4" />
            <Chevron d="M1 3l4 4 4-4" />
          </div>
        </div>
        <div className="flex h-[27px] items-center justify-between pb-1 pl-1 pr-[30px]">
          <Chevron d="M7 1L3 5l4 4" />
          <Chevron d="M3 1l4 4-4 4" />
        </div>
      </div>
      <div className="flex h-6 border-t-2 border-[#8a8a8a] bg-white">
        <label htmlFor="command" className="w-5 bg-[#f0f0f0] pl-[9px]">&gt;</label>
        <input id="command" className="min-w-0 flex-1 bg-white outline-none" />
      </div>
      <div className="flex h-[26px] items-center gap-2 overflow-hidden border-b border-r-2 border-[#8a8a8a] bg-[#f0f0f0] pl-1">
        {hints.map((hint) => (
          <span key={hint}>{hint}</span>
        ))}
      </div>
    </section>
  );
}

function CallStackPanel() {
  return (
    <section className="flex min-w-0 flex-1 flex-col">
      <PanelTitle title="Call Stack + Locals" />
      <div className="mt-[2px] h-[103px] border-l-2 border-t-2 border-[#a5a5a5] bg-white pl-px pr-[3px]">
        <table className="w-full table-fixed border-collapse text-left text-sm text-black">
          <colgroup>
            <col className="w-[249px]" />
            <col className="w-[166px]" />
            <col className="w-[167px]" />
            <col />
          </colgroup>
          <thead>
            <tr className="h-[30px] border-b border-[#a5a5a5]">
              <th className="border-r border-[#ddd] pl-[6px] font-medium">Name</th>
              <th className="border-r border-[#ddd] pl-[7px] font-medium">Location/Value</th>
              <th className="border-r border-[#ddd] pl-[7px] font-medium">Type</th>
              <th />
            </tr>
          </thead>
          <tbody>
            <tr className="h-6 leading-[22px]">
              <td className="p-0">
                <div className="flex">
                  <span className="ml-3 mt-[11px] w-4 border-t border-dotted border-[#ccc]" />
                  <svg width="12" height="14" viewBox="0 0 12 14" className="ml-1 mr-[6px] mt-px" aria-hidden="true">
                    <path d="M5 0l6 5v4l-5 4-5-4V5z" fill="#b04bb0" />
                    <path d="M5 0l6 5-5 3-5-3z" fill="#de8ede" />
                    <path d="M6 8v5l5-4V5z" fill="#8b2f8d" />
                  </svg>
                  <span className="flex-1 bg-[#f0f0f0] pl-1">main</span>
                </div>
              </td>
              <td className="border border-[#b5b5b5] bg-[#f0f0f0] p-0 pl-1">0x00000000</td>
              <td className="border border-[#b5b5b5] bg-[#f0f0f0] p-0 pl-1">int f()</td>
              <td />
            </tr>
          </tbody>
        </table>
      </div>
      <div role="tablist" className="flex bg-[#f7f7f7] pl-[2px]">
        <Tab label="Call Stack + Locals" icon={callStackIcon} active />
        <Tab label="Memory 1" icon={memory} />
        <TabRest />
      </div>
    </section>
  );
}

function StatusBar() {
  return (
    <footer className="relative flex h-6 shrink-0 items-center justify-end border-t border-[#dedede] bg-[#f0f0f0] text-[13px] font-semibold text-[#111]">
      <span className="flex h-5 w-[223px] items-center border-l border-[#d0d0d0] pl-[5px]">Simulation</span>
      <span className="flex h-5 w-[159px] items-center border-l border-[#d0d0d0] pl-5">t1: 0.00013087 sec</span>
      <span className="flex h-5 w-[23px] items-end justify-end border-l border-[#d0d0d0]">
        <svg width="12" height="12" viewBox="0 0 12 12" aria-hidden="true">
          <path d="M8 0h2v2H8zM4 4h2v2H4zM8 4h2v2H8zM0 8h2v2H0zM4 8h2v2H4zM8 8h2v2H8z" fill="#bbb" />
        </svg>
      </span>
      <span className="absolute -top-1 right-3 whitespace-nowrap font-['Noto_Sans_CJK_SC',sans-serif] text-[20px] font-light leading-5 text-[#777]">
        CSDN @一只特立独行的猪叶唧
      </span>
      <span className="absolute right-7 top-0 whitespace-nowrap font-['Noto_Sans_CJK_SC',sans-serif] text-[13px] font-light leading-4 text-[#888]">
        CSDN @叶唧
      </span>
    </footer>
  );
}

export default function App() {
  return (
    <div className="relative flex min-h-screen flex-col overflow-hidden border border-[#6b6b6b] bg-white font-['Open_Sans','Noto_Sans',sans-serif]">
      <TitleBar />
      <MenuBar />
      <FileToolbar />
      <DebugToolbar />
      <main className="flex flex-1 flex-col gap-[6px]">
        <div className="flex gap-[5px]">
          <RegistersPanel />
          <div className="flex min-w-0 flex-1 flex-col">
            <LogicAnalyzer />
            <EditorTabs />
          </div>
        </div>
        <div className="flex gap-[6px]">
          <CommandPanel />
          <CallStackPanel />
        </div>
      </main>
      <StatusBar />

      {/* callout around the Setup button */}
      <svg width="154" height="206" viewBox="0 0 154 206" className="pointer-events-none absolute left-[230px] top-[152px]" aria-hidden="true">
        <path d="M2.500 3.500h74v44h-74z" fill="none" stroke="#fb3b3b" strokeWidth="3" />
        <path d="M68 41l16 13-4 2 70 147L72 62l-4 2z" fill="#fb3b3b" />
      </svg>
    </div>
  );
}
